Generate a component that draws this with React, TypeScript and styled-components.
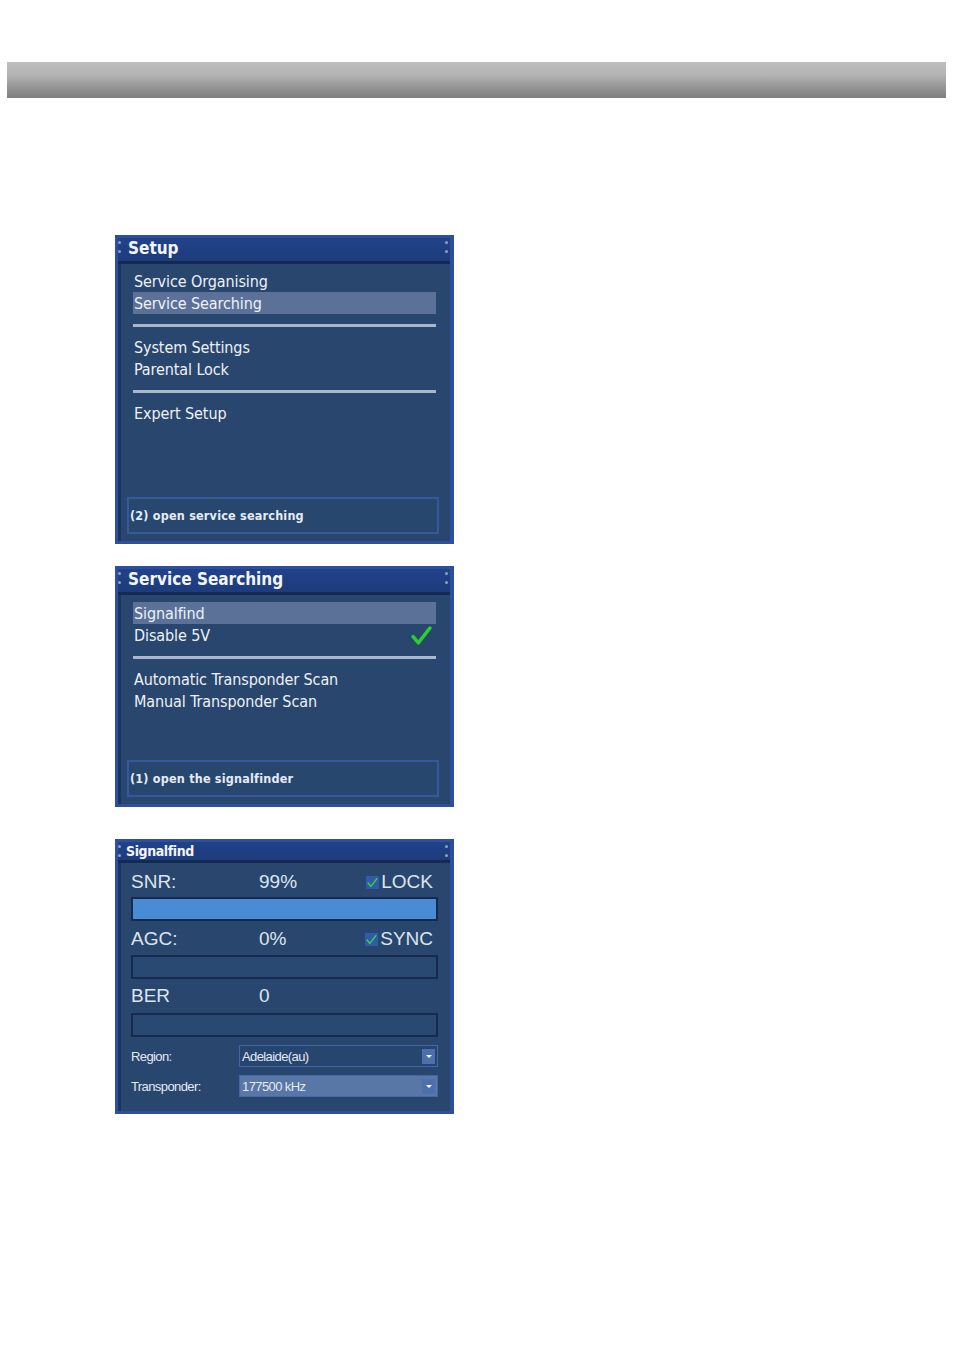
import React from "react";
import styled, { createGlobalStyle } from "styled-components";

const Global = createGlobalStyle`
  html, body { margin: 0; padding: 0; background: #ffffff; }
  body { font-family: "DejaVu Sans", sans-serif; }
`;

const Page = styled.div`
  width: 954px;
  height: 1350px;
  display: flex;
  flex-direction: column;
  padding-top: 62px;
  box-sizing: border-box;
`;

const TopBar = styled.div`
  margin-left: 7px;
  width: 939px;
  height: 36px;
  background: linear-gradient(to bottom, #bebebe 0%, #b4b4b4 35%, #959595 70%, #7e7e7e 100%);
`;

const Panels = styled.div`
  display: flex;
  flex-direction: column;
  margin-left: 115px;
  margin-top: 137px;
  gap: 22px;
`;

const Panel = styled.div<{ $h: number; $gapBefore?: number }>`
  width: 339px;
  height: ${(p) => p.$h}px;
  box-sizing: border-box;
  border: 3px solid #2d4f9e;
  border-right-width: 4px;
  background: #28466e;
  display: flex;
  flex-direction: column;
  margin-top: ${(p) => p.$gapBefore ?? 0}px;
`;

const TitleBar = styled.div<{ $h: number; $small?: boolean }>`
  height: ${(p) => p.$h}px;
  flex: none;
  box-sizing: border-box;
  background: linear-gradient(to bottom, #21428a, #1d3c7c);
  border-bottom: 3px solid #142a52;
  display: flex;
  align-items: center;
  position: relative;
  padding-left: ${(p) => (p.$small ? 8 : 10)}px;
  padding-bottom: ${(p) => (p.$small ? 1 : 3)}px;
  color: #f2f5fa;
  font-family: "DejaVu Sans Condensed", "DejaVu Sans", sans-serif;
  font-weight: bold;
  font-size: ${(p) => (p.$small ? 14 : 17)}px;
  letter-spacing: ${(p) => (p.$small ? -0.4 : 0)}px;
`;

const Dots = styled.div<{ $side: "left" | "right" }>`
  position: absolute;
  top: 3px;
  ${(p) => (p.$side === "left" ? "left: 0px;" : "right: 2px;")}
  display: flex;
  flex-direction: column;
  gap: 6px;
  span {
    width: 3px;
    height: 3px;
    border-radius: 50%;
    background: #8ea0c0;
  }
`;

const Body = styled.div<{ $pt: number }>`
  flex: 1;
  display: flex;
  flex-direction: column;
  border-left: 3px solid #1b3563;
  padding: ${(p) => p.$pt}px 14px 7px 12px;
`;

const MenuRow = styled.div<{ $selected?: boolean }>`
  height: 22px;
  display: flex;
  align-items: center;
  justify-content: space-between;
  padding-left: 1px;
  padding-right: 4px;
  background: ${(p) => (p.$selected ? "#5b7198" : "transparent")};
  color: #eef2f8;
  font-family: "DejaVu Sans Condensed", "DejaVu Sans", sans-serif;
  font-size: 16px;
  letter-spacing: -0.1px;
`;

const Separator = styled.div`
  height: 22px;
  display: flex;
  align-items: center;
  &::after {
    content: "";
    flex: 1;
    height: 3px;
    background: #aab6ca;
  }
`;

const StatusBox = styled.div`
  margin-top: auto;
  margin-left: -6px;
  margin-right: -3px;
  height: 37px;
  box-sizing: border-box;
  border: 2px solid #35599c;
  background: #27476f;
  display: flex;
  align-items: center;
  padding-left: 1px;
  color: #e6ecf5;
  font-family: "DejaVu Sans Condensed", "DejaVu Sans", sans-serif;
  font-weight: bold;
  font-size: 12.5px;
  letter-spacing: 0.2px;
`;

const SigBody = styled.div`
  flex: 1;
  display: flex;
  flex-direction: column;
  border-left: 3px solid #1b3563;
  padding: 7px 14px 0 10px;
`;

const MeterHead = styled.div`
  height: 24px;
  display: flex;
  align-items: center;
  color: #dde5f0;
  font-family: "Liberation Sans", Arial, sans-serif;
  font-size: 19px;
`;

const MeterLabel = styled.span`
  width: 128px;
`;

const MeterValue = styled.span`
  flex: 1;
`;

const Flag = styled.span`
  display: flex;
  align-items: center;
  gap: 2px;
  padding-right: 3px;
`;

const Box = styled.span`
  width: 13px;
  height: 13px;
  background: #2f5ba8;
  display: inline-flex;
  align-items: center;
  justify-content: center;
`;

const Bar = styled.div<{ $mt: number }>`
  margin-top: ${(p) => p.$mt}px;
  height: 24px;
  box-sizing: border-box;
  border: 2px solid #17294c;
  background: #2a4972;
  margin-right: -2px;
  position: relative;
  overflow: hidden;
`;

const BarFill = styled.div`
  height: 100%;
  background: #4a8bd6;
`;

const SelectRow = styled.div<{ $mt: number }>`
  margin-top: ${(p) => p.$mt}px;
  height: 22px;
  display: flex;
  align-items: center;
  color: #e4eaf3;
  font-family: "Liberation Sans", Arial, sans-serif;
  font-size: 13px;
  letter-spacing: -0.6px;
`;

const SelectLabel = styled.span`
  width: 108px;
`;

const Select = styled.div<{ $active?: boolean }>`
  flex: 1;
  height: 22px;
  margin-right: -2px;
  box-sizing: border-box;
  border: 1px solid #4566a6;
  background: ${(p) => (p.$active ? "#5877a6" : "#26466f")};
  display: flex;
  align-items: center;
  padding-left: 2px;
  font-size: 13px;
  letter-spacing: -0.6px;
`;

const SelectText = styled.span`
  flex: 1;
`;

const Arrow = styled.span`
  width: 13px;
  height: 15px;
  margin-right: 2px;
  background: #4d6fae;
  display: flex;
  align-items: center;
  justify-content: center;
  &::after {
    content: "";
    border-left: 3px solid transparent;
    border-right: 3px solid transparent;
    border-top: 3px solid #ffffff;
  }
`;

const Spacer = styled.div<{ $h: number }>`
  height: ${(p) => p.$h}px;
`;

const TitleDots = () => (
  <>
    <Dots $side="left">
      <span />
      <span />
    </Dots>
    <Dots $side="right">
      <span />
      <span />
    </Dots>
  </>
);

const Check = ({ size, color, w = 2.6 }: { size: number; color: string; w?: number }) => (
  <svg width={size} height={size} viewBox="0 0 20 20">
    <path d="M2 11 L7 17 L18 3" fill="none" stroke={color} strokeWidth={w} strokeLinecap="round" strokeLinejoin="round" />
  </svg>
);

export default function App() {
  return (
    <Page>
      <Global />
      <TopBar />
      <Panels>
        <Panel $h={309}>
          <TitleBar $h={26}>
            <TitleDots />
            Setup
          </TitleBar>
          <Body $pt={6}>
            <MenuRow>Service Organising</MenuRow>
            <MenuRow $selected>Service Searching</MenuRow>
            <Separator />
            <MenuRow>System Settings</MenuRow>
            <MenuRow>Parental Lock</MenuRow>
            <Separator />
            <MenuRow>Expert Setup</MenuRow>
            <StatusBox>(2) open service searching</StatusBox>
          </Body>
        </Panel>

        <Panel $h={241}>
          <TitleBar $h={26}>
            <TitleDots />
            Service Searching
          </TitleBar>
          <Body $pt={7}>
            <MenuRow $selected>Signalfind</MenuRow>
            <MenuRow>
              <span>Disable 5V</span>
              <Check size={21} color="#2bd12b" w={3.2} />
            </MenuRow>
            <Separator />
            <MenuRow>Automatic Transponder Scan</MenuRow>
            <MenuRow>Manual Transponder Scan</MenuRow>
            <StatusBox>(1) open the signalfinder</StatusBox>
          </Body>
        </Panel>

        <Panel $h={275} $gapBefore={10}>
          <TitleBar $h={21} $small>
            <TitleDots />
            Signalfind
          </TitleBar>
          <SigBody>
            <MeterHead>
              <MeterLabel>SNR:</MeterLabel>
              <MeterValue>99%</MeterValue>
              <Flag>
                <Box>
                  <Check size={11} color="#3fd23f" />
                </Box>
                LOCK
              </Flag>
            </MeterHead>
            <Bar $mt={3}>
              <BarFill style={{ width: "100%" }} />
            </Bar>
            <Spacer $h={6} />
            <MeterHead>
              <MeterLabel>AGC:</MeterLabel>
              <MeterValue>0%</MeterValue>
              <Flag>
                <Box>
                  <Check size={11} color="#3fd23f" />
                </Box>
                SYNC
              </Flag>
            </MeterHead>
            <Bar $mt={4} />
            <Spacer $h={5} />
            <MeterHead>
              <MeterLabel>BER</MeterLabel>
              <MeterValue>0</MeterValue>
            </MeterHead>
            <Bar $mt={5} />
            <SelectRow $mt={8}>
              <SelectLabel>Region:</SelectLabel>
              <Select>
                <SelectText>Adelaide(au)</SelectText>
                <Arrow />
              </Select>
            </SelectRow>
            <SelectRow $mt={8}>
              <SelectLabel>Transponder:</SelectLabel>
              <Select $active>
                <SelectText>177500 kHz</SelectText>
                <Arrow />
              </Select>
            </SelectRow>
          </SigBody>
        </Panel>
      </Panels>
    </Page>
  );
}
